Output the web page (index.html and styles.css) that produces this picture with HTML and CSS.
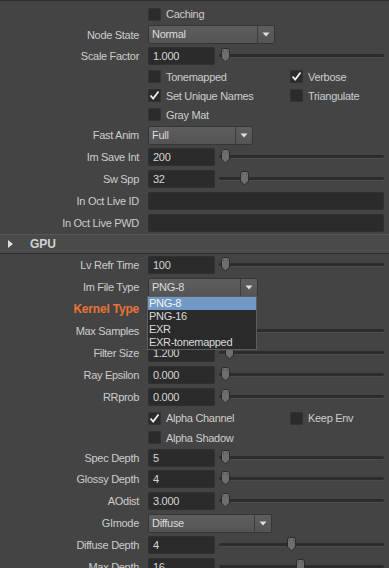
FILE: index.html
```html
<!DOCTYPE html>
<html>
<head>
<meta charset="utf-8">
<link rel="stylesheet" href="styles.css">
</head>
<body>
<svg class="defs" width="0" height="0">
  <symbol id="thumb" viewBox="0 0 11 15">
    <path d="M1.5,2.5 Q1.5,0.5 3.5,0.5 H7.5 Q9.5,0.5 9.5,2.5 V10 L5.5,14 L1.5,10 Z" fill="#6e6e6e" stroke="#2a2a2a" stroke-width="1"/>
    <path d="M3.5,2.5 V3.5 M7.5,2.5 V3.5" stroke="#3a3a3a" stroke-width="1"/>
  </symbol>
  <symbol id="check" viewBox="0 0 13 13">
    <polyline points="2.5,6.5 5.2,9.5 10.5,2.5" fill="none" stroke="#eeeeee" stroke-width="1.8"/>
  </symbol>
  <symbol id="arrow" viewBox="0 0 8 5">
    <path d="M0.5,0.5 H7.5 L4,4.5 Z" fill="#e0e0e0"/>
  </symbol>
</svg>
<div class="panel">
  <div class="row chk h20"><span class="label"></span><div class="checks"><span class="cb"><span class="box"></span>Caching</span></div></div>
  <div class="row fld h21"><span class="label">Node State</span><div class="ctl"><div class="drop w127"><span class="dtext">Normal</span><span class="darr"><svg width="8" height="5"><use href="#arrow"/></svg></span></div></div></div>
  <div class="row fld"><span class="label">Scale Factor</span><div class="ctl"><span class="field">1.000</span><div class="slider"><span class="track"></span><svg class="thumb" style="left:1px"><use href="#thumb"/></svg></div></div></div>
  <div class="row chk"><span class="label"></span><div class="checks"><span class="cb"><span class="box"></span>Tonemapped</span><span class="cb"><span class="box"><svg width="13" height="13"><use href="#check"/></svg></span>Verbose</span></div></div>
  <div class="row chk"><span class="label"></span><div class="checks"><span class="cb"><span class="box"><svg width="13" height="13"><use href="#check"/></svg></span>Set Unique Names</span><span class="cb"><span class="box"></span>Triangulate</span></div></div>
  <div class="row chk"><span class="label"></span><div class="checks"><span class="cb"><span class="box"></span>Gray Mat</span></div></div>
  <div class="row fld"><span class="label">Fast Anim</span><div class="ctl"><div class="drop w105"><span class="dtext">Full</span><span class="darr"><svg width="8" height="5"><use href="#arrow"/></svg></span></div></div></div>
  <div class="row fld"><span class="label">Im Save Int</span><div class="ctl"><span class="field">200</span><div class="slider"><span class="track"></span><svg class="thumb" style="left:1px"><use href="#thumb"/></svg></div></div></div>
  <div class="row fld"><span class="label">Sw Spp</span><div class="ctl"><span class="field">32</span><div class="slider"><span class="track"></span><svg class="thumb" style="left:20px"><use href="#thumb"/></svg></div></div></div>
  <div class="row fld"><span class="label">In Oct Live ID</span><div class="ctl"><span class="field wide"></span></div></div>
  <div class="row fld"><span class="label">In Oct Live PWD</span><div class="ctl"><span class="field wide"></span></div></div>

  <div class="section"><span class="tri"></span><span class="stitle">GPU</span></div>

  <div class="row fld"><span class="label">Lv Refr Time</span><div class="ctl"><span class="field">100</span><div class="slider"><span class="track"></span><svg class="thumb" style="left:1px"><use href="#thumb"/></svg></div></div></div>
  <div class="row fld"><span class="label">Im File Type</span><div class="ctl">
    <div class="drop w110 open"><span class="dtext">PNG-8</span><span class="darr"><svg width="8" height="5"><use href="#arrow"/></svg></span>
      <ul class="popup">
        <li class="sel">PNG-8</li>
        <li>PNG-16</li>
        <li>EXR</li>
        <li>EXR-tonemapped</li>
      </ul>
    </div>
  </div></div>
  <div class="row fld"><span class="label kernel">Kernel Type</span><div class="ctl"></div></div>
  <div class="row fld"><span class="label">Max Samples</span><div class="ctl"><span class="field"></span><div class="slider"><span class="track"></span><svg class="thumb" style="left:1px"><use href="#thumb"/></svg></div></div></div>
  <div class="row fld"><span class="label">Filter Size</span><div class="ctl"><span class="field">1.200</span><div class="slider"><span class="track"></span><svg class="thumb" style="left:5px"><use href="#thumb"/></svg></div></div></div>
  <div class="row fld"><span class="label">Ray Epsilon</span><div class="ctl"><span class="field">0.000</span><div class="slider"><span class="track"></span><svg class="thumb" style="left:1px"><use href="#thumb"/></svg></div></div></div>
  <div class="row fld"><span class="label">RRprob</span><div class="ctl"><span class="field">0.000</span><div class="slider"><span class="track"></span><svg class="thumb" style="left:1px"><use href="#thumb"/></svg></div></div></div>
  <div class="row chk h20"><span class="label"></span><div class="checks"><span class="cb"><span class="box"><svg width="13" height="13"><use href="#check"/></svg></span>Alpha Channel</span><span class="cb"><span class="box"></span>Keep Env</span></div></div>
  <div class="row chk"><span class="label"></span><div class="checks"><span class="cb"><span class="box"></span>Alpha Shadow</span></div></div>
  <div class="row fld h21"><span class="label">Spec Depth</span><div class="ctl"><span class="field">5</span><div class="slider"><span class="track"></span><svg class="thumb" style="left:1px"><use href="#thumb"/></svg></div></div></div>
  <div class="row fld"><span class="label">Glossy Depth</span><div class="ctl"><span class="field">4</span><div class="slider"><span class="track"></span><svg class="thumb" style="left:1px"><use href="#thumb"/></svg></div></div></div>
  <div class="row fld"><span class="label">AOdist</span><div class="ctl"><span class="field">3.000</span><div class="slider"><span class="track"></span><svg class="thumb" style="left:1px"><use href="#thumb"/></svg></div></div></div>
  <div class="row fld"><span class="label">GImode</span><div class="ctl"><div class="drop w124"><span class="dtext">Diffuse</span><span class="darr"><svg width="8" height="5"><use href="#arrow"/></svg></span></div></div></div>
  <div class="row fld"><span class="label">Diffuse Depth</span><div class="ctl"><span class="field">4</span><div class="slider"><span class="track"></span><svg class="thumb" style="left:67px"><use href="#thumb"/></svg></div></div></div>
  <div class="row fld"><span class="label">Max Depth</span><div class="ctl"><span class="field">16</span><div class="slider"><span class="track"></span><svg class="thumb" style="left:76px"><use href="#thumb"/></svg></div></div></div>
</div>
</body>
</html>
```
FILE: styles.css
```css
html, body {
  margin: 0;
  padding: 0;
}
body {
  background: #444444;
  width: 389px;
  height: 568px;
  overflow: hidden;
  font-family: "Liberation Sans", Arial, sans-serif;
  font-size: 11px;
  letter-spacing: -0.3px;
  color: #cccccc;
}
.defs {
  position: absolute;
  width: 0;
  height: 0;
}
.panel {
  border-top: 1px solid #2c2c2c;
  padding-top: 3px;
}
.row {
  display: grid;
  grid-template-columns: 139px 1fr;
  column-gap: 9px;
  align-items: center;
  height: 22px;
}
.row.chk { height: 19px; }
.row.h20 { height: 20px; }
.row.h21 { height: 21px; }
.label {
  text-align: right;
  white-space: nowrap;
  color: #cdcdcd;
}
.label.kernel {
  color: #e87438;
  font-weight: bold;
  font-size: 12px;
  letter-spacing: -0.2px;
}
.ctl {
  display: flex;
  align-items: center;
  gap: 4px;
  padding-right: 5px;
  height: 100%;
}
.field {
  box-sizing: border-box;
  width: 67px;
  height: 18px;
  background: #2b2b2b;
  border: 1px solid #303030;
  border-radius: 2px;
  padding-left: 4px;
  line-height: 16px;
  color: #d6d6d6;
  flex: none;
}
.field.wide {
  flex: 1;
}
.slider {
  position: relative;
  flex: 1;
  height: 18px;
}
.track {
  position: absolute;
  left: 0;
  right: 0;
  top: 7px;
  height: 3px;
  background: #2c2c2c;
  border-radius: 2px;
  box-shadow: 0 1px 0 #4c4c4c;
}
.thumb {
  position: absolute;
  top: 1px;
  width: 11px;
  height: 15px;
}
.checks {
  display: flex;
  align-items: center;
}
.cb {
  display: flex;
  align-items: center;
  gap: 5px;
  width: 142px;
  white-space: nowrap;
  color: #cdcdcd;
}
.box {
  box-sizing: border-box;
  width: 13px;
  height: 13px;
  background: #2b2b2b;
  border: 1px solid #333333;
  border-radius: 1px;
  display: flex;
  align-items: center;
  justify-content: center;
  flex: none;
}
.box svg {
  display: block;
  margin: -1px;
}
.drop {
  position: relative;
  box-sizing: border-box;
  height: 19px;
  display: flex;
  align-items: stretch;
  background: linear-gradient(#5e5e5e, #545454);
  border: 1px solid #353535;
  border-radius: 2px;
  color: #dcdcdc;
}
.drop.w127 { width: 127px; }
.drop.w105 { width: 105px; }
.drop.w110 { width: 110px; }
.drop.w124 { width: 124px; }
.dtext {
  flex: 1;
  padding-left: 3px;
  line-height: 17px;
}
.darr {
  width: 16px;
  border-left: 1px solid #3c3c3c;
  display: flex;
  align-items: center;
  justify-content: center;
}
.darr svg {
  display: block;
}
.popup {
  position: absolute;
  z-index: 5;
  left: -2px;
  top: 17px;
  width: 110px;
  margin: 0;
  padding: 0;
  list-style: none;
  background: #2a2a2a;
  border: 1px solid #5c5c5c;
  box-sizing: border-box;
  color: #dadada;
}
.popup li {
  height: 13px;
  line-height: 13px;
  padding-left: 1px;
}
.popup li.sel {
  background: #7199c6;
  color: #f4f4f4;
}
.section {
  box-sizing: border-box;
  height: 20px;
  display: flex;
  align-items: center;
  background: #4a4a4a;
  border-top: 1px solid #575757;
  border-bottom: 1px solid #2e2e2e;
}
.tri {
  width: 0;
  height: 0;
  margin-left: 8px;
  border-left: 5px solid #dcdcdc;
  border-top: 4.5px solid transparent;
  border-bottom: 4.5px solid transparent;
}
.stitle {
  margin-left: 17px;
  font-weight: bold;
  font-size: 12px;
  letter-spacing: 0;
  color: #d2d2d2;
}
```
